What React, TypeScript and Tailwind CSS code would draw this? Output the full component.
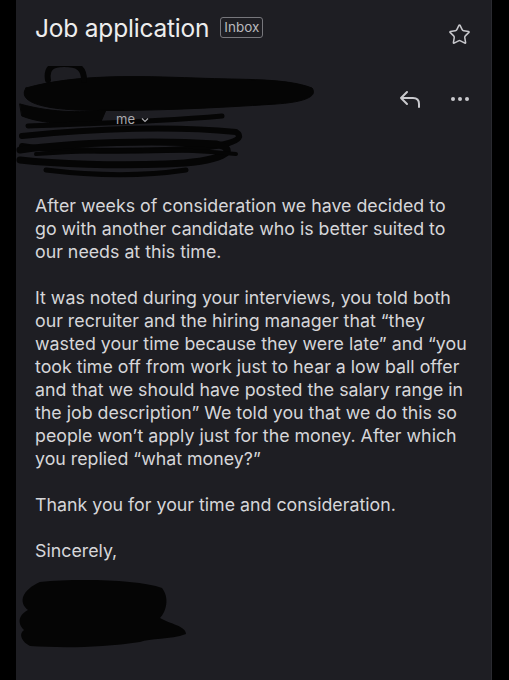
import { Star } from 'lucide-react';

const font = { fontFamily: 'Inter, Roboto, "Liberation Sans", sans-serif' };

const para1 = [
  'After weeks of consideration we have decided to',
  'go with another candidate who is better suited to',
  'our needs at this time.',
];

const para2 = [
  'It was noted during your interviews, you told both',
  'our recruiter and the hiring manager that “they',
  'wasted your time because they were late” and “you',
  'took time off from work just to hear a low ball offer',
  'and that we should have posted the salary range in',
  'the job description” We told you that we do this so',
  'people won’t apply just for the money. After which',
  'you replied “what money?”',
];

function Lines({ lines }: { lines: string[] }) {
  return (
    <p>
      {lines.map((l) => (
        <span key={l} className="block whitespace-nowrap">
          {l}
        </span>
      ))}
    </p>
  );
}

function Scribble() {
  return (
    <svg className="absolute left-0 top-0" width="320" height="112" viewBox="0 0 320 112">
      <g fill="#050505" stroke="#050505" strokeLinecap="round" strokeLinejoin="round">
        <path d="M10 22 C 60 8, 120 10, 180 12 C 230 14, 270 12, 296 22 C 302 30, 290 36, 260 38 C 200 42, 120 46, 60 44 C 20 42, 2 34, 10 22 Z" />
        <path d="M32 14 C 30 2, 36 -2, 48 -2 C 62 -2, 68 2, 68 14" fill="none" strokeWidth="6" />
        <path d="M4 38 C 40 48, 70 46, 90 44 L 84 58 C 50 60, 20 56, 6 50 Z" />
        <path d="M12 60 C 60 58, 140 56, 206 50" fill="none" strokeWidth="5" />
        <path d="M6 70 C 80 62, 160 60, 220 66 C 232 74, 210 82, 150 84 C 90 86, 30 84, 6 80" fill="none" strokeWidth="6" />
        <path d="M4 84 C 60 76, 140 74, 200 78 C 226 84, 206 96, 150 98 C 100 100, 40 98, 4 94" fill="none" strokeWidth="7" />
        <path d="M20 88 C 80 84, 160 82, 220 88" fill="none" strokeWidth="4" />
        <path d="M30 104 C 80 110, 130 110, 170 104" fill="none" strokeWidth="5" />
      </g>
    </svg>
  );
}

function Signature() {
  return (
    <svg width="190" height="80" viewBox="0 0 190 80">
      <g fill="#050505">
        <path d="M24 6 C 64 2, 124 4, 146 12 C 154 22, 150 36, 144 42 C 154 48, 170 50, 170 58 C 154 64, 134 62, 124 66 C 84 72, 44 72, 14 70 C 6 66, 2 58, 8 54 C 0 46, 4 38, 12 34 C 2 26, 6 14, 24 6 Z" />
      </g>
    </svg>
  );
}

export default function App() {
  return (
    <div className="flex h-[680px] w-full overflow-hidden bg-black" style={font}>
      <div className="relative ml-[16px] w-[476px] border-r border-[#2a2a30] bg-[#1e1e23]">
        <div className="flex items-start pl-[19px] pr-[20px] pt-[12px]">
          <h1 className="text-[24.5px] leading-[32px] tracking-[-0.2px] text-[#ededed]">Job application</h1>
          <span className="ml-[11px] mt-[5px] rounded-[3px] border border-[#77777c] px-[3px] text-[13.5px] leading-[19px] text-[#b8b8bc]">
            Inbox
          </span>
          <Star className="ml-auto mt-[11px] h-[23px] w-[23px] text-[#c7c7cb]" strokeWidth={1.6} />
        </div>

        <div className="relative mt-[20px] h-[110px]">
          <Scribble />
          <div className="absolute left-[100px] top-[44px] flex items-center gap-[6px] text-[13px] text-[#a9a9ad]">
            <span>me</span>
            <svg width="8" height="6" viewBox="0 0 8 6">
              <path d="M1 1.5 L4 4.5 L7 1.5" fill="none" stroke="#a9a9ad" strokeWidth="1.2" />
            </svg>
          </div>
          <div className="absolute right-[22px] top-[24px] flex items-center gap-[30px]">
            <svg width="22" height="18" viewBox="0 0 22 18">
              <path d="M8 2 L2 8 L8 14 M2 8 H14 C 18 8, 20 10, 20 14 V17" fill="none" stroke="#c9c9cd" strokeWidth="2" strokeLinecap="round" strokeLinejoin="round" />
            </svg>
            <div className="flex gap-[3px]">
              <span className="h-[4px] w-[4px] rounded-full bg-[#c9c9cd]" />
              <span className="h-[4px] w-[4px] rounded-full bg-[#c9c9cd]" />
              <span className="h-[4px] w-[4px] rounded-full bg-[#c9c9cd]" />
            </div>
          </div>
        </div>

        <div className="pl-[19px] pr-[20px] pt-[18px] text-[17.8px] leading-[23px] text-[#d6d6d9]">
          <Lines lines={para1} />
          <div className="mt-[23px]">
            <Lines lines={para2} />
          </div>
          <p className="mt-[23px]">Thank you for your time and consideration.</p>
          <p className="mt-[23px]">Sincerely,</p>
        </div>
        <div className="mt-[14px]">
          <Signature />
        </div>
      </div>
    </div>
  );
}
